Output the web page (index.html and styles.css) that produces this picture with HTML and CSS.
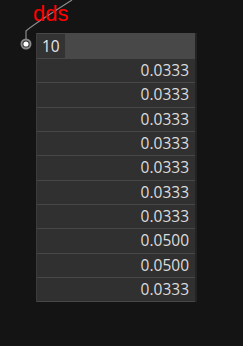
FILE: index.html
```html
<!DOCTYPE html>
<html lang="en">
<head>
  <meta charset="UTF-8">
  <title>Node</title>
  <link rel="stylesheet" href="styles.css">
</head>
<body>
  <div class="canvas">
    <svg class="wire" width="243" height="60" viewBox="0 0 243 60">
      <path d="M26 39 L26 31 C30 27 50 14 72 0" fill="none" stroke="#8a8a8a" stroke-width="1.2"/>
      <circle cx="26" cy="44" r="5.5" fill="#8a8a8a"/>
      <circle cx="26" cy="44" r="3.6" fill="#2a2a2a"/>
      <circle cx="26" cy="44" r="2.6" fill="#ffffff"/>
    </svg>

    <div class="node-title">dds</div>

    <div class="node">
      <div class="node-head">
        <span class="count">10</span>
      </div>
      <div class="rows">
        <div class="row">0.0333</div>
        <div class="row">0.0333</div>
        <div class="row">0.0333</div>
        <div class="row">0.0333</div>
        <div class="row">0.0333</div>
        <div class="row">0.0333</div>
        <div class="row">0.0333</div>
        <div class="row">0.0500</div>
        <div class="row">0.0500</div>
        <div class="row">0.0333</div>
      </div>
    </div>
  </div>
</body>
</html>
```

FILE: styles.css
```css
body {
  margin: 0;
  background-color: #141414;
  font-family: "Open Sans", "Noto Sans", sans-serif;
}
.canvas {
  position: relative;
  width: 243px;
  height: 346px;
  overflow: hidden;
}
.wire {
  position: absolute;
  left: 0;
  top: 0;
}
.node-title {
  position: absolute;
  left: 33px;
  top: 3px;
  font-family: "Liberation Sans", Arial, sans-serif;
  font-size: 22px;
  line-height: 22px;
  color: #ff0000;
}
.node {
  position: absolute;
  left: 36px;
  top: 33px;
  width: 161px;
  box-sizing: border-box;
  border-left: 1px solid #3c3c3c;
  border-right: 2px solid #232323;
}
.node-head {
  display: flex;
  height: 26px;
  background-color: #484848;
  padding: 1px 0 1px 0;
  box-sizing: border-box;
}
.count {
  display: flex;
  align-items: center;
  width: 28px;
  padding-left: 5px;
  box-sizing: border-box;
  background-color: #333333;
  color: #e6e6e6;
  font-size: 15.5px;
}
.row {
  height: 24.33px;
  box-sizing: border-box;
  border-bottom: 1px solid #474747;
  background-color: #303030;
  color: #dcdcdc;
  font-size: 15.5px;
  line-height: 23px;
  text-align: right;
  padding-right: 6px;
}
```
